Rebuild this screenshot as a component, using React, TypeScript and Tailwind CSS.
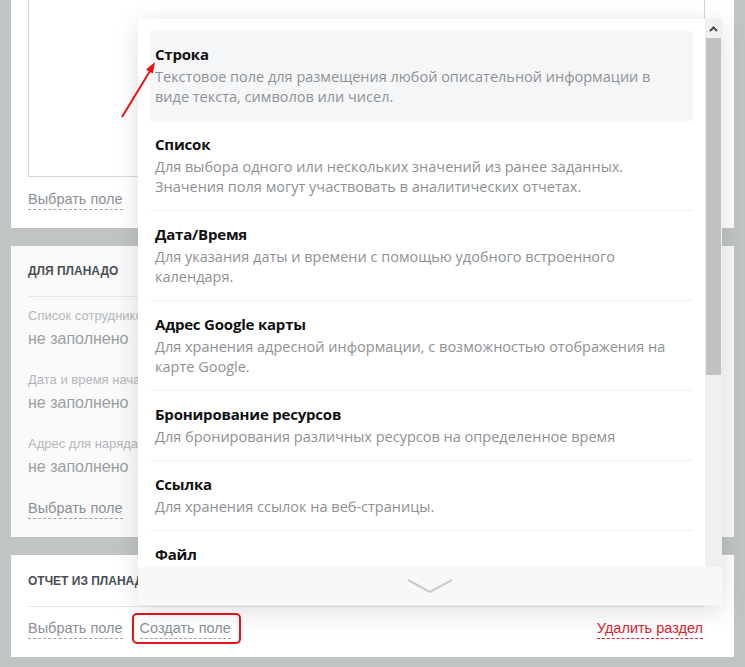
import React from 'react';

const fieldTypes = [
  {
    title: 'Строка',
    lines: ['Текстовое поле для размещения любой описательной информации в', 'виде текста, символов или чисел.'],
    active: true,
  },
  {
    title: 'Список',
    lines: ['Для выбора одного или нескольких значений из ранее заданных.', 'Значения поля могут участвовать в аналитических отчетах.'],
  },
  {
    title: 'Дата/Время',
    lines: ['Для указания даты и времени с помощью удобного встроенного', 'календаря.'],
  },
  {
    title: 'Адрес Google карты',
    lines: ['Для хранения адресной информации, с возможностью отображения на', 'карте Google.'],
  },
  {
    title: 'Бронирование ресурсов',
    lines: ['Для бронирования различных ресурсов на определенное время'],
  },
  {
    title: 'Ссылка',
    lines: ['Для хранения ссылок на веб-страницы.'],
  },
  {
    title: 'Файл',
    lines: ['Для загрузки и хранения файлов любого формата.'],
  },
];

const planadoFields = ['Список сотрудников', 'Дата и время начала', 'Адрес для наряда'];

const DashedLink = ({ children, red = false }: { children: React.ReactNode; red?: boolean }) => (
  <span
    className={`text-[14.5px] leading-[20px] border-b border-dashed ${
      red ? 'text-[#e3202b] border-[#e3202b]' : 'text-[#8a9199] border-[#9ea4aa]'
    }`}
  >
    {children}
  </span>
);

const FieldDropdown = () => (
  <div className="absolute left-[138px] top-[19px] w-[584px] h-[586px] bg-white shadow-[0_6px_24px_rgba(0,0,0,0.13)] flex flex-col font-['Open_Sans',sans-serif]">
    <div className="flex h-[548px]">
      {/* List */}
      <div className="flex-1 overflow-hidden pt-[12px] px-[12px]">
        {fieldTypes.map((f) => (
          <div
            key={f.title}
            className={`pl-[5px] pt-[12px] pb-[13px] border-b ${f.active ? 'bg-[#f5f6f8] border-transparent' : 'border-[#eef0f1]'}`}
          >
            <div className="text-[15px] leading-[23px] font-bold tracking-[-0.2px] text-[#111]">{f.title}</div>
            <div className="mt-px text-[14.5px] leading-[20px] text-[#8e9194] whitespace-nowrap">
              {f.lines.map((l) => (
                <div key={l}>{l}</div>
              ))}
            </div>
          </div>
        ))}
      </div>

      {/* Scrollbar */}
      <div className="w-[17px] bg-[#f0f0f0] flex flex-col">
        <div className="h-[19px] flex items-center justify-center">
          <svg width="9" height="6" viewBox="0 0 9 6">
            <path d="M1 5 L4.5 1.5 L8 5" fill="none" stroke="#4a4a4a" strokeWidth="2" />
          </svg>
        </div>
        <div className="h-[337px] mx-px bg-[#c1c1c1]" />
      </div>
    </div>

    {/* Footer */}
    <div className="flex-1 bg-[#f7f8f9] flex items-center justify-center">
      <svg width="46" height="14" viewBox="0 0 46 14">
        <polyline points="1,1 23,13 45,1" fill="none" stroke="#c9cbcd" strokeWidth="2" />
      </svg>
    </div>
  </div>
);

export default function App() {
  return (
    <div className="relative w-[745px] h-[667px] overflow-hidden bg-[#c1c4c5] font-['Liberation_Sans',Arial,sans-serif]">
      <div className="flex flex-col gap-[18px] px-[11px]">
        {/* Card 1 */}
        <div className="-mt-[20px] bg-white pl-[17px] pr-[29px] pb-[18px]">
          <div className="h-[197px] border border-[#d6d9dc]" />
          <div className="mt-[12px] flex">
            <DashedLink>Выбрать поле</DashedLink>
          </div>
        </div>

        {/* Card 2 */}
        <div className="bg-[#fafafb] px-[17px] pt-[17px] pb-[18px]">
          <div className="text-[12px] leading-[16px] font-bold uppercase text-[#4a4f55] pb-[17px] border-b border-[#e6e8ea] whitespace-nowrap">
            Для Планадо
          </div>
          <div className="mt-[11px] flex flex-col gap-[23px]">
            {planadoFields.map((label) => (
              <div key={label}>
                <div className="text-[13px] leading-[16px] text-[#b4b7ba] whitespace-nowrap">{label}</div>
                <div className="mt-[5px] text-[16px] leading-[20px] text-[#9b9ea1]">не заполнено</div>
              </div>
            ))}
          </div>
          <div className="mt-[21px] flex">
            <DashedLink>Выбрать поле</DashedLink>
          </div>
        </div>

        {/* Card 3 */}
        <div className="bg-white pl-[17px] pr-[31px] pt-[18px] pb-[18px]">
          <div className="text-[12px] leading-[16px] font-bold uppercase text-[#4a4f55] pb-[17px] border-b border-[#e6e8ea] whitespace-nowrap">
            Отчет из Планадо
          </div>
          <div className="mt-[11px] flex items-center">
            <DashedLink>Выбрать поле</DashedLink>
            <span className="ml-[9px] -my-[5px] rounded-[5px] border-2 border-[#e8121b] pl-[6px] pr-[8px] py-[3px] flex">
              <DashedLink>Создать поле</DashedLink>
            </span>
            <span className="ml-auto flex">
              <DashedLink red>Удалить раздел</DashedLink>
            </span>
          </div>
        </div>
      </div>

      <FieldDropdown />

      {/* Annotation arrow */}
      <svg className="absolute left-0 top-0 pointer-events-none" width="745" height="667">
        <line x1="122" y1="117" x2="150" y2="71" stroke="#f01010" strokeWidth="2" />
        <polygon points="155,62 152.8,73.5 145.9,69.4" fill="#f01010" />
      </svg>
    </div>
  );
}
